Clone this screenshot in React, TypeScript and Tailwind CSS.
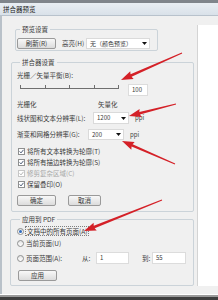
import React from "react";

function Btn({ w, children }: { w: string; children: React.ReactNode }) {
  return (
    <div
      className={`${w} h-[11px] shrink-0 flex items-center justify-center border border-[#9a9a9a] rounded-[2px] bg-linear-to-b from-[#f8f8f8] to-[#dcdcdc] text-[6.5px] leading-none text-[#3a3a3a]`}
    >
      {children}
    </div>
  );
}

function Group({
  title,
  box,
  legend,
  children,
}: {
  title: string;
  box: string;
  legend: string;
  children: React.ReactNode;
}) {
  return (
    <div className={`${box} shrink-0 border border-[#cbd3d9] rounded-[2px] flex flex-col`}>
      <div
        className={`${legend} -mt-[5px] px-[2px] w-fit h-[9px] leading-[9px] bg-[#f0f0f0] text-[6.5px] text-[#3a3a3a] whitespace-nowrap`}
      >
        {title}
      </div>
      {children}
    </div>
  );
}

function Check({ disabled, label }: { disabled?: boolean; label: string }) {
  return (
    <div className="h-[11px] flex items-center pl-[1px] gap-[2px]">
      <div
        className={`w-[7px] h-[7px] shrink-0 border ${
          disabled ? "border-[#c6c6c6]" : "border-[#8e8f8f]"
        } bg-white flex items-center justify-center`}
      >
        <svg width="5" height="5" viewBox="0 0 5 5">
          <path
            d="M0.6 2.4 L2 3.9 L4.5 0.8"
            fill="none"
            stroke={disabled ? "#b4b4b4" : "#4b5a74"}
            strokeWidth="1"
          />
        </svg>
      </div>
      <span
        className={`text-[6.5px] leading-none whitespace-nowrap ${
          disabled ? "text-[#a6a6a6]" : "text-[#3a3a3a]"
        }`}
      >
        {label}
      </span>
    </div>
  );
}

function Radio({ on }: { on?: boolean }) {
  return (
    <div className="w-[7px] h-[7px] shrink-0 rounded-full border border-[#8e8f8f] bg-linear-to-b from-[#e4e4e4] to-white flex items-center justify-center">
      {on && <div className="w-[3px] h-[3px] rounded-full bg-[#2f6cc0]" />}
    </div>
  );
}

function Sel({ w, text }: { w: string; text: string }) {
  return (
    <div
      className={`${w} h-full shrink-0 bg-white border border-[#dadada] flex items-center pl-[3px] pr-[2px]`}
    >
      <span className="flex-1 text-[6px] leading-none whitespace-nowrap">{text}</span>
      <svg width="5" height="3" viewBox="0 0 5 3">
        <path d="M0 0H5L2.5 3Z" fill="#111" />
      </svg>
    </div>
  );
}

function Field({ w, text }: { w: string; text: string }) {
  return (
    <div
      className={`${w} h-full shrink-0 bg-white border border-[#dcdcdc] flex items-center pl-[3px] text-[6px] leading-none`}
    >
      {text}
    </div>
  );
}

function arrowPoints(x1: number, y1: number, x2: number, y2: number) {
  const dx = x2 - x1;
  const dy = y2 - y1;
  const L = Math.hypot(dx, dy);
  const ux = dx / L;
  const uy = dy / L;
  const px = -uy;
  const py = ux;
  const hl = 11;
  const hw = 4.2;
  const bx = x2 - ux * hl;
  const by = y2 - uy * hl;
  const pts: [number, number][] = [
    [x1 + px * 0.5, y1 + py * 0.5],
    [bx + px * 1.3, by + py * 1.3],
    [bx - ux * 1 + px * hw, by - uy * 1 + py * hw],
    [x2, y2],
    [bx - ux * 1 - px * hw, by - uy * 1 - py * hw],
    [bx - px * 1.3, by - py * 1.3],
    [x1 - px * 0.5, y1 - py * 0.5],
  ];
  return pts.map((p) => p.map((v) => v.toFixed(2)).join(",")).join(" ");
}

const arrows: [number, number, number, number][] = [
  [182, 53, 121, 80],
  [176, 104, 129, 116],
  [175, 164, 122, 141],
  [162, 200, 84, 231],
];

export default function App() {
  return (
    <div className="relative w-[218px] h-[300px] bg-[#f0f0f0] flex flex-col overflow-hidden font-['Noto_Sans_CJK_SC','Noto_Sans',sans-serif] text-[#3a3a3a]">
      <div className="h-[3px] shrink-0 bg-[#80858b]" />
      <div className="h-[13px] shrink-0 bg-linear-to-b from-[#e9eef3] to-[#d9e1e9] border-b border-[#b8c2cc] flex items-center pl-[3px] text-[6.5px] leading-none text-[#222]">
        拼合器预览
      </div>
      <div className="flex-1 flex border-l-2 border-[#b9c1c9]">
        <div className="w-[195px] shrink-0 flex flex-col">
          <Group title="预览设置" box="mt-[13px] ml-[13px] w-[143px] h-[22px]" legend="ml-[4px]">
            <div className="flex items-center mt-[4px] pl-[1px] h-[11px]">
              <Btn w="w-[39px]">刷新(R)</Btn>
              <span className="ml-[6px] w-[24px] shrink-0 text-[6.5px] leading-none whitespace-nowrap">高亮(H)</span>
              <Sel w="w-[64px]" text="无（颜色预览）" />
            </div>
          </Group>

          <Group title="拼合器设置" box="mt-[11px] ml-[9px] w-[183px] h-[150px]" legend="ml-[8px]">
            <div className="pl-[5px] flex flex-col">
              <div className="mt-[4px] h-[9px] flex items-center text-[6.5px] leading-none whitespace-nowrap">
                光栅／矢量平衡(B):
              </div>
              <div className="mt-[4px] h-[12px] flex items-start">
                <div className="ml-[3px] mt-[1px] w-[99px] h-[4px] border-b border-[#6f6f6f] flex justify-between items-end">
                  <div className="w-[1px] h-[3px] bg-[#6f6f6f]" />
                  <div className="w-[1px] h-[3px] bg-[#6f6f6f]" />
                  <div className="w-[1px] h-[3px] bg-[#6f6f6f]" />
                  <div className="w-[1px] h-[3px] bg-[#6f6f6f]" />
                  <div className="w-[1px] h-[3px] bg-[#6f6f6f]" />
                </div>
                <div className="ml-[9px] h-[12px] flex">
                  <Field w="w-[20px]" text="100" />
                </div>
              </div>
              <div className="mt-[4px] h-[9px] flex items-center text-[6.5px] leading-none whitespace-nowrap">
                <span className="w-[81px] shrink-0">光栅化</span>
                <span>矢量化</span>
              </div>
              <div className="mt-[3px] h-[12px] flex items-center text-[6.5px] leading-none whitespace-nowrap">
                <span className="w-[76px] shrink-0">线状图和文本分辨率(L):</span>
                <Sel w="w-[36px]" text="1200" />
                <span className="ml-[6px] text-[6px]">ppi</span>
              </div>
              <div className="mt-[5px] h-[11px] flex items-center text-[6.5px] leading-none whitespace-nowrap">
                <span className="w-[71px] shrink-0">渐变和网格分辨率(G):</span>
                <Sel w="w-[36px]" text="200" />
                <span className="ml-[6px] text-[6px]">ppi</span>
              </div>
              <div className="mt-[6px] flex flex-col">
                <Check label="将所有文本转换为轮廓(T)" />
                <Check label="将所有描边转换为轮廓(S)" />
                <Check disabled label="修剪复杂区域(C)" />
                <Check label="保留叠印(O)" />
              </div>
              <div className="mt-[5px] h-[11px] flex">
                <Btn w="w-[39px]">确定</Btn>
                <div className="ml-[12px] flex">
                  <Btn w="w-[33px]">取消</Btn>
                </div>
              </div>
            </div>
          </Group>

          <Group title="应用到 PDF" box="mt-[7px] ml-[8px] w-[184px] h-[67px]" legend="ml-[9px]">
            <div className="pl-[6px] flex flex-col text-[6.5px] leading-none whitespace-nowrap">
              <div className="mt-[1px] h-[12px] flex items-center gap-[1px]">
                <Radio on />
                <span className="border border-dotted border-[#808080] px-[1px] py-[1px]">文档中的所有页面(A)</span>
              </div>
              <div className="h-[12px] flex items-center gap-[2px]">
                <Radio />
                <span>当前页面(U)</span>
              </div>
              <div className="mt-[3px] h-[12px] flex items-center">
                <Radio />
                <span className="ml-[2px] w-[56px] shrink-0">页面范围(A):</span>
                <span className="w-[14px] shrink-0">从:</span>
                <Field w="w-[33px]" text="1" />
                <span className="ml-[13px] w-[10px] shrink-0">到:</span>
                <Field w="w-[34px]" text="55" />
              </div>
              <div className="mt-[6px] h-[11px] flex pl-[1px]">
                <Btn w="w-[39px]">应用</Btn>
              </div>
            </div>
          </Group>
        </div>
        <div className="mt-[9px] h-[261px] flex-1 bg-white border-l border-[#d4d4d4]" />
      </div>
      <div className="h-[1px] shrink-0 bg-white" />
      <div className="h-[2px] shrink-0 bg-[#9a9a9a]" />
      <div className="h-[3px] shrink-0 bg-[#3e3e3e]" />

      <svg className="absolute inset-0 pointer-events-none" width="218" height="300" viewBox="0 0 218 300">
        {arrows.map((a, i) => (
          <polygon key={i} points={arrowPoints(a[0], a[1], a[2], a[3])} fill="#d42027" />
        ))}
      </svg>
    </div>
  );
}
